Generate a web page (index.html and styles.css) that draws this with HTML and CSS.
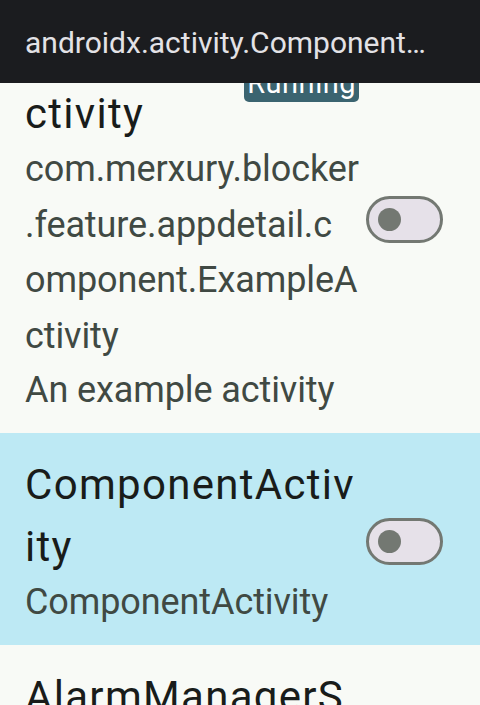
FILE: index.html
```html
<!DOCTYPE html>
<html>
<head>
<meta charset="utf-8">
<link rel="stylesheet" href="styles.css">
</head>
<body>
<header class="appbar">
  <h1 class="appbar-title">androidx.activity.ComponentActivity</h1>
</header>
<main class="list">
  <div class="row">
    <div class="texts">
      <div class="head">
        <p class="title">ExampleActivity</p>
        <span class="tag">Running</span>
      </div>
      <p class="sub pkg">com.merxury.blocker<wbr>.feature.appdetail.c<wbr>omponent.ExampleA<wbr>ctivity</p>
      <p class="sub">An example activity</p>
    </div>
    <div class="switch"><span class="thumb"></span></div>
  </div>
  <div class="row selected">
    <div class="texts">
      <p class="title">ComponentActivity</p>
      <p class="sub">ComponentActivity</p>
    </div>
    <div class="switch"><span class="thumb"></span></div>
  </div>
  <div class="row">
    <div class="texts">
      <p class="title">AlarmManagerSchedulerBroadcastReceiver</p>
      <p class="sub">com.google.android.datatransport.runtime.scheduling.jobscheduling.AlarmManagerSchedulerBroadcastReceiver</p>
    </div>
    <div class="switch"><span class="thumb"></span></div>
  </div>
</main>
</body>
</html>
```
FILE: styles.css
```css
html, body {
  margin: 0;
  padding: 0;
}
body {
  width: 480px;
  height: 705px;
  overflow: hidden;
  background: #f8faf6;
  font-family: Roboto, "Noto Sans", sans-serif;
}
.appbar {
  position: fixed;
  top: 0;
  left: 0;
  right: 0;
  z-index: 2;
  height: 83px;
  box-sizing: border-box;
  padding: 24px 45px 0 25px;
  background: #1b1c1f;
}
.appbar-title {
  margin: 0;
  font-size: 30px;
  font-weight: 400;
  line-height: 38px;
  color: #e3e2e6;
  white-space: nowrap;
  overflow: hidden;
  text-overflow: ellipsis;
}
.list {
  display: flex;
  flex-direction: column;
}
.row {
  display: flex;
  align-items: center;
  gap: 5px;
  padding: 21px 37px 15px 25px;
  background: #f8faf6;
}
.row.selected {
  background: #bde9f4;
}
.texts {
  flex: 1;
  min-width: 0;
}
.head {
  display: flex;
  align-items: center;
  gap: 12px;
}
.title {
  margin: 0;
  font-size: 42px;
  line-height: 62px;
  letter-spacing: 1.3px;
  color: #191c1a;
  word-break: break-all;
}
.head .title {
  flex: 1 1 auto;
  min-width: 0;
}
.tag {
  flex: none;
  margin-right: 2px;
  font-size: 29px;
  line-height: 38px;
  padding: 0 3px;
  border-radius: 5px;
  background: #3b6470;
  color: #ffffff;
  letter-spacing: 0.5px;
}
.sub {
  margin: -3px 0 0;
  font-size: 36px;
  line-height: 55px;
  letter-spacing: -0.1px;
  color: #404943;
  word-break: break-all;
}
.sub.pkg {
  word-break: normal;
  line-height: 55.7px;
}
.sub + .sub {
  margin-top: -2px;
}
.switch {
  flex: none;
  width: 77px;
  height: 47px;
  box-sizing: border-box;
  border: 3px solid #737872;
  border-radius: 24px;
  background: #e6e1e9;
  display: flex;
  align-items: center;
  padding-left: 9px;
}
.thumb {
  width: 23px;
  height: 23px;
  border-radius: 50%;
  background: #737872;
}
```
